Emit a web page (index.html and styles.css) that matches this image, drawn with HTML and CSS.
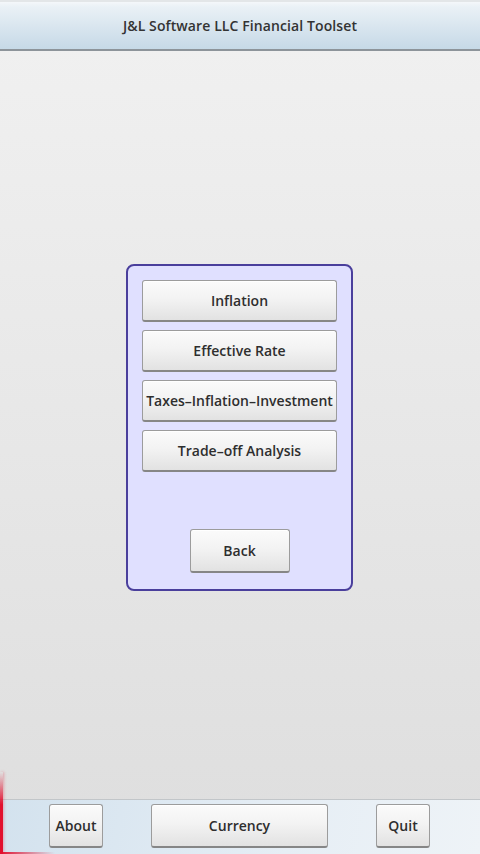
FILE: index.html
```html
<!DOCTYPE html>
<html>
<head>
<meta charset="utf-8">
<link rel="stylesheet" href="styles.css">
</head>
<body>
<div class="app">
  <header class="titlebar">J&amp;L Software LLC Financial Toolset</header>
  <main class="content">
    <div class="panel">
      <div class="menu">
        <button class="btn wide">Inflation</button>
        <button class="btn wide">Effective Rate</button>
        <button class="btn wide">Taxes–Inflation–Investment</button>
        <button class="btn wide">Trade–off Analysis</button>
      </div>
      <button class="btn back">Back</button>
    </div>
  </main>
  <footer class="bottombar">
    <button class="btn small">About</button>
    <button class="btn currency">Currency</button>
    <button class="btn small">Quit</button>
  </footer>
  <div class="glow-left"></div>
  <div class="glow-bottom"></div>
</div>
</body>
</html>
```

FILE: styles.css
```css
* { box-sizing: border-box; }
html, body { margin: 0; padding: 0; }
body {
  width: 480px;
  height: 854px;
  overflow: hidden;
  font-family: "Open Sans", "DejaVu Sans", sans-serif;
  color: #333;
}
.app {
  position: relative;
  width: 480px;
  height: 854px;
  display: flex;
  flex-direction: column;
  background: linear-gradient(#f1f1f1, #dedede);
}
.titlebar {
  height: 51px;
  flex: none;
  display: flex;
  align-items: center;
  justify-content: center;
  font-weight: 600;
  font-size: 14px;
  letter-spacing: 0.1px;
  color: #333;
  background: linear-gradient(#f4f7fa 0%, #eaf1f6 10%, #c6d9e7 100%);
  border-top: 2px solid #e3e6e8;
  border-bottom: 2px solid #8d949a;
}
.content {
  flex: 1;
  display: flex;
  align-items: center;
  justify-content: center;
}
.panel {
  width: 227px;
  height: 327px;
  margin: 4px 0 0 -1px;
  background: #e0e0ff;
  border: 2px solid #4a3f9c;
  border-radius: 8px;
  padding: 14px;
  display: flex;
  flex-direction: column;
  align-items: center;
}
.menu {
  display: flex;
  flex-direction: column;
  gap: 8px;
  width: 195px;
}
.btn {
  font-family: "Open Sans", "DejaVu Sans", sans-serif;
  font-weight: 600;
  font-size: 14px;
  color: #2e2e2e;
  background: linear-gradient(#fbfbfb 0%, #f3f3f3 45%, #e2e2e2 100%);
  border: 1px solid #9c9c9c;
  border-bottom: 2px solid #868686;
  border-radius: 3px;
  box-shadow: inset 0 1px 0 #fff;
  padding: 0;
  margin: 0;
  white-space: nowrap;
}
.wide { width: 195px; height: 42px; }
.back { width: 100px; height: 44px; margin-top: 57px; }
.bottombar {
  height: 55px;
  flex: none;
  display: flex;
  align-items: flex-start;
  padding: 4px 0 0 49px;
  border-top: 1px solid #c2c6c9;
  background: linear-gradient(100deg, #d3e2ee 0%, #e6eef5 60%, #eef3f7 100%);
}
.small { width: 54px; height: 44px; }
.currency { width: 177px; height: 44px; margin: 0 48px; }
.glow-left {
  position: absolute;
  left: 0;
  bottom: 0;
  width: 3px;
  height: 82px;
  background: linear-gradient(to top, #e2102e 0%, #e2102e 60%, rgba(226,16,46,0) 100%);
  box-shadow: 1px 0 3px rgba(226,16,46,0.3);
}
.glow-bottom {
  position: absolute;
  left: 0;
  bottom: 0;
  width: 55px;
  height: 2px;
  background: linear-gradient(to right, #e2102e 0%, rgba(226,16,46,0.6) 40%, rgba(226,16,46,0) 100%);
}
```
